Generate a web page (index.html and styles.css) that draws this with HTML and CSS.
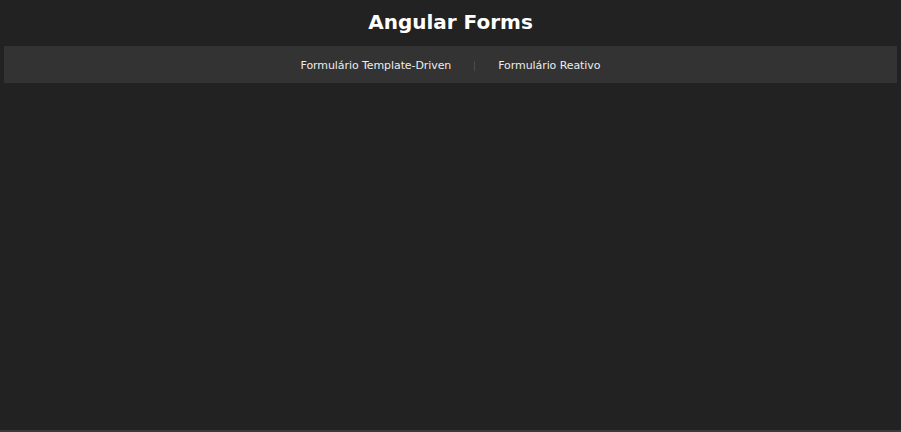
FILE: index.html
```html
<!DOCTYPE html>
<html lang="pt-BR">
<head>
<meta charset="utf-8">
<title>Angular Forms</title>
<link rel="stylesheet" href="styles.css">
</head>
<body>
<div class="app">
  <header class="header">
    <h1 class="title">Angular Forms</h1>
  </header>
  <nav class="nav">
    <a class="nav-link" href="#">Formulário Template-Driven</a>
    <span class="nav-sep"></span>
    <a class="nav-link" href="#">Formulário Reativo</a>
  </nav>
  <main class="content"></main>
</div>
</body>
</html>
```
FILE: styles.css
```css
html, body {
  margin: 0;
  padding: 0;
  height: 100%;
  background: #222222;
}
body {
  font-family: "DejaVu Sans", "Open Sans", sans-serif;
  color: #e6e6e6;
}
.app {
  height: 100%;
  display: flex;
  flex-direction: column;
  padding: 0 4px;
  box-sizing: border-box;
  border-bottom: 2px solid #3a3a3a;
}
.header {
  height: 46px;
  display: flex;
  align-items: center;
  justify-content: center;
}
.title {
  margin: 0 0 2px;
  font-size: 20px;
  font-weight: 700;
  color: #ffffff;
}
.nav {
  height: 37px;
  background: #333333;
  display: flex;
  align-items: center;
  justify-content: center;
  gap: 23px;
  padding-top: 2px;
  box-sizing: border-box;
}
.nav-link {
  color: #ececec;
  text-decoration: none;
  font-size: 11px;
  letter-spacing: -0.08px;
}
.nav-sep {
  width: 1px;
  height: 10px;
  background: #4a4a4a;
}
.content {
  flex: 1;
}
```
